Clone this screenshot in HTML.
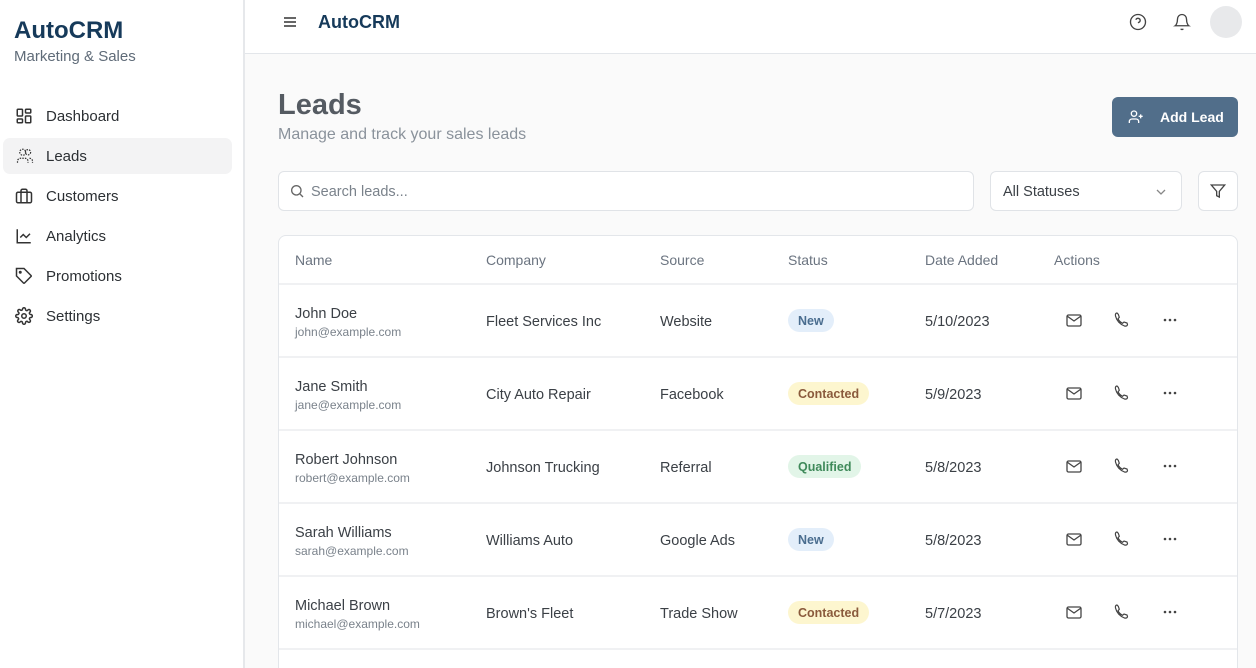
<!DOCTYPE html>
<html style="width:1256px;height:668px;overflow:hidden"><head><style>
*{box-sizing:border-box;margin:0;padding:0}
body{width:1256px;height:668px;overflow:hidden;font-family:"Liberation Sans",sans-serif;background:#fafafa;color:#333;position:relative}
.side{position:absolute;left:0;top:0;width:245px;height:668px;background:#fff;border-right:2px solid #e6e8eb}
.logo{position:absolute;left:14px;top:17px;font-size:24px;font-weight:bold;color:#163a5a}
.sub{position:absolute;left:14px;top:48px;font-size:15px;color:#5f6b78}
.nav{position:absolute;left:3px;width:229px;height:36px;border-radius:7px;font-size:15px;color:#2b2f33}
.nav svg{position:absolute;left:12px;top:9px}
.nav span{position:absolute;left:43px;top:10px}
.top{position:absolute;left:245px;top:0;right:0;height:54px;background:#fff;border-bottom:1px solid #e3e6ea}
.abs{position:absolute}
.th{position:absolute;top:252px;font-size:14px;color:#6b7480}
.row{position:absolute;left:279px;width:958px;height:73px;border-top:2px solid #f0f1f3}
.c{position:absolute;font-size:14.5px;color:#3b4046}
.badge{position:absolute;top:24px;height:23px;border-radius:12px;font-size:12.5px;font-weight:bold;padding:5px 10px}
.new{background:#e3eefa;color:#4a6d8f}
.con{background:#fdf6cf;color:#8a5a3c}
.qua{background:#e2f5e8;color:#3f8a5a}
</style></head><body>
<div class="side">
<div class="logo">AutoCRM</div>
<div class="sub">Marketing &amp; Sales</div>
<div class="nav" style="top:98px"><svg width="18" height="18" viewBox="0 0 24 24" fill="none" stroke="#333" stroke-width="2"><rect x="3" y="3" width="7" height="9" rx="1"/><rect x="14" y="3" width="7" height="5" rx="1"/><rect x="14" y="12" width="7" height="9" rx="1"/><rect x="3" y="16" width="7" height="5" rx="1"/></svg><span>Dashboard</span></div>
<div class="nav" style="top:138px;background:#f3f3f4"><svg width="20" height="18" viewBox="0 0 24 24" fill="none" stroke="#333" stroke-width="1.6" stroke-dasharray="2 1.5"><circle cx="9" cy="7" r="4"/><circle cx="16" cy="7" r="3.5"/><path d="M2 21v-2a4 4 0 0 1 4-4h6a4 4 0 0 1 4 4v2M18 15a4 4 0 0 1 4 4v2"/></svg><span>Leads</span></div>
<div class="nav" style="top:178px"><svg width="18" height="18" viewBox="0 0 24 24" fill="none" stroke="#333" stroke-width="2"><rect x="2" y="7" width="20" height="14" rx="2"/><path d="M16 21V5a2 2 0 0 0-2-2h-4a2 2 0 0 0-2 2v16"/></svg><span>Customers</span></div>
<div class="nav" style="top:218px"><svg width="18" height="18" viewBox="0 0 24 24" fill="none" stroke="#333" stroke-width="2"><path d="M3 3v18h18"/><path d="M7 14l4-4 4 4 5-5"/></svg><span>Analytics</span></div>
<div class="nav" style="top:258px"><svg width="18" height="18" viewBox="0 0 24 24" fill="none" stroke="#333" stroke-width="2"><path d="M12 2H2v10l9.3 9.3a1 1 0 0 0 1.4 0l8.6-8.6a1 1 0 0 0 0-1.4z"/><circle cx="7" cy="7" r="1"/></svg><span>Promotions</span></div>
<div class="nav" style="top:298px"><svg width="18" height="18" viewBox="0 0 24 24" fill="none" stroke="#333" stroke-width="2"><circle cx="12" cy="12" r="3"/><path d="M19.4 15a1.7 1.7 0 0 0 .3 1.8l.1.1a2 2 0 1 1-2.8 2.8l-.1-.1a1.7 1.7 0 0 0-2.9 1.2V21a2 2 0 1 1-4 0v-.1a1.7 1.7 0 0 0-2.9-1.2l-.1.1a2 2 0 1 1-2.8-2.8l.1-.1A1.7 1.7 0 0 0 3 14H3a2 2 0 1 1 0-4h.1A1.7 1.7 0 0 0 4.6 7l-.1-.1a2 2 0 1 1 2.8-2.8l.1.1A1.7 1.7 0 0 0 10 3V3a2 2 0 1 1 4 0v.1a1.7 1.7 0 0 0 2.9 1.2l.1-.1a2 2 0 1 1 2.8 2.8l-.1.1A1.7 1.7 0 0 0 21 10h.1a2 2 0 1 1 0 4H21a1.7 1.7 0 0 0-1.6 1z"/></svg><span>Settings</span></div>
</div>
<div class="top">
<svg class="abs" style="left:38px;top:15px" width="14" height="14" viewBox="0 0 14 14" stroke="#333" stroke-width="1.6"><path d="M1 3h12M1 7h12M1 11h12"/></svg>
<div class="abs" style="left:73px;top:12px;font-size:18px;font-weight:bold;color:#163a5a">AutoCRM</div>
<svg class="abs" style="left:884px;top:13px" width="18" height="18" viewBox="0 0 24 24" fill="none" stroke="#444" stroke-width="1.8"><circle cx="12" cy="12" r="10"/><path d="M9.1 9a3 3 0 0 1 5.8 1c0 2-3 3-3 3M12 17h.01"/></svg>
<svg class="abs" style="left:928px;top:13px" width="18" height="18" viewBox="0 0 24 24" fill="none" stroke="#444" stroke-width="1.8"><path d="M6 8a6 6 0 0 1 12 0c0 7 3 9 3 9H3s3-2 3-9M10.3 21a1.9 1.9 0 0 0 3.4 0"/></svg>
<div class="abs" style="left:965px;top:6px;width:32px;height:32px;border-radius:50%;background:#e8e9eb"></div>
</div>
<div class="abs" style="left:278px;top:89px;font-size:29px;font-weight:bold;color:#555b62">Leads</div>
<div class="abs" style="left:278px;top:126px;font-size:16px;color:#8a929b">Manage and track your sales leads</div>
<div class="abs" style="left:1112px;top:97px;width:126px;height:40px;border-radius:6px;background:#516e8a;color:#fff;font-size:14px;font-weight:bold">
<svg class="abs" style="left:16px;top:12px" width="16" height="16" viewBox="0 0 24 24" fill="none" stroke="#fff" stroke-width="2"><circle cx="9" cy="7" r="4"/><path d="M2 21v-2a4 4 0 0 1 4-4h6a4 4 0 0 1 4 4v2M19 8v6M16 11h6"/></svg>
<span class="abs" style="left:48px;top:12px">Add Lead</span></div>
<div class="abs" style="left:278px;top:171px;width:696px;height:40px;border:1px solid #e0e3e7;border-radius:6px;background:#fff">
<svg class="abs" style="left:10px;top:11px" width="16" height="16" viewBox="0 0 24 24" fill="none" stroke="#666" stroke-width="2"><circle cx="11" cy="11" r="7"/><path d="M21 21l-4.3-4.3"/></svg>
<span class="abs" style="left:32px;top:12px;font-size:14.5px;color:#7a828b">Search leads...</span></div>
<div class="abs" style="left:990px;top:171px;width:192px;height:40px;border:1px solid #e0e3e7;border-radius:6px;background:#fff">
<span class="abs" style="left:12px;top:12px;font-size:14.5px;color:#3b4046">All Statuses</span>
<svg class="abs" style="left:164px;top:14px" width="12" height="12" viewBox="0 0 12 12" fill="none" stroke="#888" stroke-width="1.3"><path d="M2 4l4 4 4-4"/></svg></div>
<div class="abs" style="left:1198px;top:171px;width:40px;height:40px;border:1px solid #e0e3e7;border-radius:6px;background:#fff">
<svg class="abs" style="left:11px;top:11px" width="16" height="16" viewBox="0 0 24 24" fill="none" stroke="#444" stroke-width="2"><path d="M22 3H2l8 9.5V19l4 2v-8.5z"/></svg></div>
<div class="abs" style="left:278px;top:235px;width:960px;height:433px;border:1px solid #e3e6ea;border-bottom:none;border-radius:8px 8px 0 0;background:#fff"></div>
<div class="th" style="left:295px">Name</div><div class="th" style="left:486px">Company</div><div class="th" style="left:660px">Source</div><div class="th" style="left:788px">Status</div><div class="th" style="left:925px">Date Added</div><div class="th" style="left:1054px">Actions</div>
<div class="row" style="top:283px"><div class="c" style="left:16px;top:21px">John Doe</div><div class="c" style="left:16px;top:40px;font-size:12px;color:#7a828b">john@example.com</div><div class="c" style="left:207px;top:29px">Fleet Services Inc</div><div class="c" style="left:381px;top:29px">Website</div><span class="badge new" style="left:509px">New</span><div class="c" style="left:646px;top:29px">5/10/2023</div></div>
<div class="row" style="top:356px"><div class="c" style="left:16px;top:21px">Jane Smith</div><div class="c" style="left:16px;top:40px;font-size:12px;color:#7a828b">jane@example.com</div><div class="c" style="left:207px;top:29px">City Auto Repair</div><div class="c" style="left:381px;top:29px">Facebook</div><span class="badge con" style="left:509px">Contacted</span><div class="c" style="left:646px;top:29px">5/9/2023</div></div>
<div class="row" style="top:429px"><div class="c" style="left:16px;top:21px">Robert Johnson</div><div class="c" style="left:16px;top:40px;font-size:12px;color:#7a828b">robert@example.com</div><div class="c" style="left:207px;top:29px">Johnson Trucking</div><div class="c" style="left:381px;top:29px">Referral</div><span class="badge qua" style="left:509px">Qualified</span><div class="c" style="left:646px;top:29px">5/8/2023</div></div>
<div class="row" style="top:502px"><div class="c" style="left:16px;top:21px">Sarah Williams</div><div class="c" style="left:16px;top:40px;font-size:12px;color:#7a828b">sarah@example.com</div><div class="c" style="left:207px;top:29px">Williams Auto</div><div class="c" style="left:381px;top:29px">Google Ads</div><span class="badge new" style="left:509px">New</span><div class="c" style="left:646px;top:29px">5/8/2023</div></div>
<div class="row" style="top:575px"><div class="c" style="left:16px;top:21px">Michael Brown</div><div class="c" style="left:16px;top:40px;font-size:12px;color:#7a828b">michael@example.com</div><div class="c" style="left:207px;top:29px">Brown's Fleet</div><div class="c" style="left:381px;top:29px">Trade Show</div><span class="badge con" style="left:509px">Contacted</span><div class="c" style="left:646px;top:29px">5/7/2023</div></div>
<div class="row" style="top:648px;height:20px"></div>
<svg class="abs" style="left:0;top:0" width="1256" height="668">
<defs>
<g id="m" fill="none" stroke="#444" stroke-width="1.3"><rect x="1067" y="-5" width="14" height="11" rx="1.5"/><path d="M1067 -4l7 5 7-5"/></g>
<g id="p" fill="none" stroke="#444" stroke-width="1.2"><path d="M1117 -7c-1 0-2 1-1.5 3 1 4 4 8 9 10 2 .5 3-.5 3-1.5l-.5-1.5-3-1-1.5 1.3c-2-1-3.5-2.5-4.5-4.5l1.3-1.5-1-3z"/></g>
<g id="d" fill="#444"><circle cx="1165" cy="0" r="1.3"/><circle cx="1170" cy="0" r="1.3"/><circle cx="1175" cy="0" r="1.3"/></g>
</defs>
<g transform="translate(0,320)"><use href="#m"/><use href="#p"/><use href="#d"/></g>
<g transform="translate(0,393)"><use href="#m"/><use href="#p"/><use href="#d"/></g>
<g transform="translate(0,466)"><use href="#m"/><use href="#p"/><use href="#d"/></g>
<g transform="translate(0,539)"><use href="#m"/><use href="#p"/><use href="#d"/></g>
<g transform="translate(0,612)"><use href="#m"/><use href="#p"/><use href="#d"/></g>
</svg>
</body></html>
